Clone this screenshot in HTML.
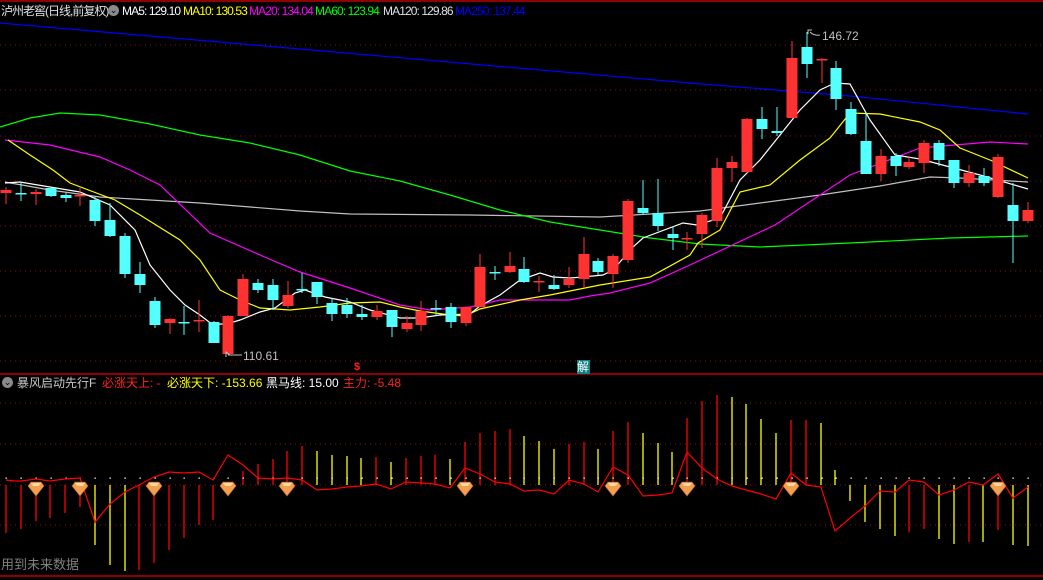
<!DOCTYPE html>
<html><head><meta charset="utf-8">
<style>
html,body{margin:0;padding:0;background:#000;width:1043px;height:580px;overflow:hidden}
body{position:relative;font-family:"Liberation Sans","Noto Sans CJK SC",sans-serif;font-size:12px}
.t{position:absolute;white-space:nowrap;line-height:14px}
.m{font-size:12px;letter-spacing:-0.9px}
svg{position:absolute;left:0;top:0}
</style></head><body>
<svg id="s" width="1043" height="580" xmlns="http://www.w3.org/2000/svg">
<line x1="0" y1="1" x2="1043" y2="1" stroke="#c00000" stroke-width="1.5"/>
<line x1="0" y1="374" x2="1043" y2="374" stroke="#c00000" stroke-width="1.5"/>
<line x1="0" y1="576" x2="1043" y2="576" stroke="#c00000" stroke-width="1.5"/>
<g stroke="#8a1010" stroke-dasharray="1,4" stroke-width="1">
<line x1="0" y1="45" x2="1043" y2="45"/><line x1="0" y1="90" x2="1043" y2="90"/>
<line x1="0" y1="136" x2="1043" y2="136"/><line x1="0" y1="181" x2="1043" y2="181"/>
<line x1="0" y1="226" x2="1043" y2="226"/><line x1="0" y1="271" x2="1043" y2="271"/>
<line x1="0" y1="316" x2="1043" y2="316"/><line x1="0" y1="361" x2="1043" y2="361"/>
<line x1="0" y1="403" x2="1043" y2="403"/><line x1="0" y1="444" x2="1043" y2="444"/>
<line x1="0" y1="485" x2="1043" y2="485"/><line x1="0" y1="525" x2="1043" y2="525"/>
</g>
<g fill="none" stroke-width="1.2">
<polyline stroke="#0000ff" points="0,23 300,49 690,83 850,96 1028,114"/>
<polyline stroke="#c0c0c0" points="5,182 50,190 100,197 200,203 300,211 350,214 470,215 600,217 650,214 700,211 760,203 820,195 880,186 930,177 960,178 1028,182"/>
<polyline stroke="#00ff00" points="0,127 30,118 60,113 100,115 150,124 200,135 250,143 300,155 350,171 400,181 450,195 500,210 550,222 600,230 650,238 700,244 760,247 850,243 950,238 1028,236"/>
<polyline stroke="#ff00ff" points="5,140 50,145 100,157 130,170 160,185 210,233 267,258 300,272 350,288 400,305 430,310 470,307 500,300 570,300 590,296 610,293 650,283 690,265 775,225 850,175 920,148 990,142 1028,144"/>
<polyline stroke="#ffff00" points="8,140 30,155 53,170 70,183 115,200 140,215 180,240 200,260 220,290 240,300 260,308 290,310 320,307 350,303 380,302 400,307 420,311 450,315 465,316 480,309 520,300 550,295 600,285 650,277 690,255 698,243 720,230 740,192 770,185 800,160 830,138 850,113 880,114 920,122 940,130 960,148 990,160 1028,178"/>
<polyline stroke="#ffffff" points="5,183 20,182 50,187 80,192 110,205 135,230 150,265 170,290 185,305 200,315 213,325 230,323 240,320 260,312 275,308 295,293 305,290 325,297 350,302 370,310 400,318 420,318 440,315 470,314 480,306 500,295 520,280 540,273 553,277 570,278 583,277 603,275 613,270 633,247 643,238 683,223 697,225 720,218 740,180 760,160 780,135 800,110 820,90 835,83 850,84 870,120 895,155 920,159 950,167 980,175 1028,189"/>
</g>
<g id="c"></g>
<g id="b"></g>
<polyline fill="none" stroke="#ff0000" stroke-width="1.2" points="6,480 15,481 21,481 36,479 50,481 65,479 80,478 95,522 110,504 125,492 139,485 154,477 169,472 184,473 199,472 213,480 228,455 243,465 258,478 273,479 287,478 302,480 317,490 332,489 347,487 361,486 376,484 391,489 406,482 421,483 435,484 450,488 465,468 480,474 495,482 510,484 524,491 539,490 554,494 569,480 584,484 598,492 613,467 628,475 643,496 658,495 672,493 687,452 702,468 717,479 732,486 746,490 761,494 776,499 791,473 806,485 821,487 835,531 850,518 865,506 880,491 895,492 909,480 924,482 939,495 954,490 969,482 983,485 998,474 1013,498 1028,487"/>
<g id="d"></g>
<g stroke="#c0c0c0" fill="none" stroke-width="1"><polyline points="230,355 226,352 226,357"/><line x1="228" y1="355" x2="242" y2="355"/>
<polyline points="808,34 808,30 812,30"/><path d="M810,32 q4,4 10,3"/></g>
<rect x="577" y="360" width="13" height="14" fill="#108080"/>
</svg>
<div class="t" style="left:1px;top:4px;color:#e0e0e0;font-size:12px;letter-spacing:-1px">泸州老窖(日线,前复权)</div>
<div class="t" style="left:108px;top:5px;width:11px;height:11px;border-radius:6px;background:#8a8a8a;color:#000;font-size:9px;text-align:center;line-height:11px">⌄</div>
<div class="t m" style="left:122px;top:4px;color:#fff">MA5: 129.10</div>
<div class="t m" style="left:183px;top:4px;color:#ffff00">MA10: 130.53</div>
<div class="t m" style="left:249px;top:4px;color:#ff00ff">MA20: 134.04</div>
<div class="t m" style="left:315px;top:4px;color:#00ff00">MA60: 123.94</div>
<div class="t m" style="left:383px;top:4px;color:#e0e0e0">MA120: 129.86</div>
<div class="t m" style="left:455px;top:4px;color:#0000ff">MA250: 137.44</div>
<div class="t" style="left:822px;top:29px;color:#c0c0c0">146.72</div>
<div class="t" style="left:243px;top:349px;color:#c0c0c0">110.61</div>
<div class="t" style="left:354px;top:360px;color:#ff2020;font-weight:bold;font-size:11px">$</div>
<div class="t" style="left:577px;top:360px;color:#fff;font-size:12px">解</div>
<div class="t" style="left:2px;top:377px;width:11px;height:11px;border-radius:6px;background:#8a8a8a;color:#000;font-size:9px;text-align:center;line-height:11px">⌄</div>
<div class="t" style="left:17px;top:376px;color:#c8c8c8;font-size:12px">暴风启动先行F</div>
<div class="t" style="left:102px;top:376px;color:#ff2020;font-size:12px">必涨天上: -</div>
<div class="t" style="left:167px;top:376px;color:#ffff00;font-size:12px">必涨天下: -153.66</div>
<div class="t" style="left:266px;top:376px;color:#fff;font-size:12px">黑马线: 15.00</div>
<div class="t" style="left:343px;top:376px;color:#ff2020;font-size:12px">主力: -5.48</div>
<div class="t" style="left:1px;top:558px;color:#808080;font-size:13px">用到未来数据</div>
<script>
var C=[[6,190,193,187,204,'r'],[21,193,193,183,201,'c'],[36,192,194,189,205,'r'],[51,188,196,188,197,'c'],[66,195,198,193,202,'c'],[80,195,195,188,206,'r'],[95,200,221,197,226,'c'],[110,220,236,203,237,'c'],[125,236,274,233,278,'c'],[140,274,285,262,293,'c'],[155,301,325,297,328,'c'],[170,319,323,318,334,'r'],[184,322,322,306,335,'c'],[199,320,320,300,332,'r'],[214,322,343,321,343,'c'],[228,316,354,315,355,'r'],[243,279,316,274,316,'r'],[258,283,290,279,293,'c'],[273,285,300,279,310,'c'],[288,295,306,281,308,'r'],[302,289,289,273,293,'c'],[317,282,297,282,304,'c'],[332,303,314,298,321,'c'],[347,305,314,298,318,'c'],[362,314,317,305,320,'c'],[377,311,317,305,320,'r'],[392,310,327,310,337,'c'],[407,323,329,316,332,'r'],[421,311,325,301,331,'r'],[436,308,308,300,316,'c'],[451,307,322,303,328,'c'],[466,307,323,307,326,'r'],[480,267,307,254,307,'r'],[495,272,272,266,280,'c'],[510,266,272,252,273,'r'],[524,269,282,257,283,'c'],[539,281,281,276,292,'r'],[554,285,289,275,290,'c'],[569,279,285,267,288,'r'],[584,254,279,237,288,'r'],[598,261,272,258,275,'c'],[613,256,274,254,288,'r'],[628,201,260,199,263,'r'],[643,208,213,180,215,'c'],[658,213,226,179,231,'c'],[673,234,238,226,250,'c'],[687,238,238,232,250,'r'],[702,215,234,213,248,'r'],[717,168,221,158,227,'r'],[732,162,168,156,182,'r'],[747,119,172,118,173,'r'],[762,119,129,107,139,'c'],[777,131,133,107,136,'c'],[792,58,118,41,118,'r'],[807,47,64,32,78,'c'],[822,59,59,58,83,'r'],[836,68,99,61,110,'c'],[851,109,134,102,135,'c'],[866,141,174,113,174,'c'],[881,156,174,149,181,'r'],[896,156,166,153,176,'c'],[909,162,167,156,169,'r'],[924,143,163,140,173,'r'],[939,143,160,140,166,'c'],[954,160,183,160,188,'c'],[969,173,183,165,187,'r'],[984,176,183,168,186,'c'],[998,157,197,154,198,'r'],[1013,205,221,183,263,'c'],[1028,210,221,202,223,'r']];
var h='';
C.forEach(function(k){var col=k[5]=='r'?'#ff3232':'#54ffff';
h+='<line x1="'+k[0]+'" y1="'+k[3]+'" x2="'+k[0]+'" y2="'+k[4]+'" stroke="'+col+'" stroke-width="1"/>';
var hh=Math.max(k[2]-k[1],1.5);h+='<rect x="'+(k[0]-5.5)+'" y="'+k[1]+'" width="11" height="'+hh+'" fill="'+col+'"/>';});
document.getElementById('c').innerHTML=h;
var B=[[6,533,'r'],[21,529,'r'],[36,521,'r'],[50,518,'r'],[65,513,'r'],[80,507,'r'],[95,545,'y'],[110,565,'y'],[125,571,'y'],[139,570,'r'],[154,563,'r'],[169,550,'r'],[184,538,'r'],[199,525,'r'],[213,520,'r'],[243,471,'r'],[258,464,'r'],[273,459,'r'],[287,451,'r'],[302,446,'r'],[317,451,'y'],[332,455,'y'],[347,456,'y'],[361,458,'y'],[376,457,'r'],[391,462,'y'],[406,458,'r'],[421,456,'r'],[435,455,'r'],[450,459,'y'],[465,442,'r'],[480,433,'r'],[495,431,'r'],[510,429,'r'],[524,436,'y'],[539,441,'y'],[554,449,'y'],[569,444,'r'],[584,442,'r'],[598,449,'y'],[613,431,'r'],[628,422,'r'],[643,433,'y'],[658,443,'y'],[672,452,'y'],[687,418,'r'],[702,401,'r'],[717,395,'r'],[732,397,'y'],[746,404,'y'],[761,419,'y'],[776,433,'y'],[791,420,'r'],[806,420,'r'],[821,423,'y'],[835,470,'y'],[850,501,'y'],[865,522,'y'],[880,529,'y'],[895,536,'y'],[909,532,'r'],[924,529,'r'],[939,539,'y'],[954,544,'y'],[969,542,'r'],[983,542,'y'],[998,530,'r'],[1013,545,'y'],[1028,546,'y']];
h='';B.forEach(function(k){var col=k[2]=='r'?'#ff0000':'#ffff00';
h+='<line x1="'+k[0]+'" y1="485" x2="'+k[0]+'" y2="'+k[1]+'" stroke="'+col+'" stroke-width="1.3"/>';});
C.forEach(function(k){h+='<rect x="'+(k[0]-0.5)+'" y="477.5" width="1.3" height="1.3" fill="#fff"/>';});
document.getElementById('b').innerHTML=h;
var D=[36,80,154,228,287,465,613,687,791,998];h='';
D.forEach(function(x){h+='<polygon points="'+(x-8)+',486 '+(x-5)+',482 '+(x+5)+',482 '+(x+8)+',486 '+x+',496" fill="#f0a050" stroke="#c06020" stroke-width="0.6"/><polygon points="'+(x-5)+',483 '+(x+5)+',483 '+(x+3)+',486 '+(x-3)+',486" fill="#ffd8a0"/>';});
document.getElementById('d').innerHTML=h;
</script>
</body></html>
